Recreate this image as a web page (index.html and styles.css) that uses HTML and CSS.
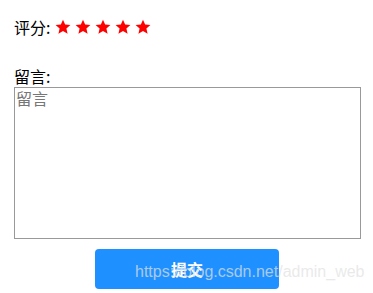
FILE: index.html
```html
<!DOCTYPE html>
<html lang="zh">
<head>
<meta charset="utf-8">
<link rel="stylesheet" href="styles.css">
</head>
<body>
<form class="form">
  <div class="rating-row">
    <span class="label">评分:</span>
    <span class="stars">
      <svg class="star" viewBox="0 0 24 24"><path d="M12 1l3.2 7.3 7.9.7-6 5.3 1.8 7.8L12 17.9l-6.9 4.2 1.8-7.8-6-5.3 7.9-.7z"/></svg>
      <svg class="star" viewBox="0 0 24 24"><path d="M12 1l3.2 7.3 7.9.7-6 5.3 1.8 7.8L12 17.9l-6.9 4.2 1.8-7.8-6-5.3 7.9-.7z"/></svg>
      <svg class="star" viewBox="0 0 24 24"><path d="M12 1l3.2 7.3 7.9.7-6 5.3 1.8 7.8L12 17.9l-6.9 4.2 1.8-7.8-6-5.3 7.9-.7z"/></svg>
      <svg class="star" viewBox="0 0 24 24"><path d="M12 1l3.2 7.3 7.9.7-6 5.3 1.8 7.8L12 17.9l-6.9 4.2 1.8-7.8-6-5.3 7.9-.7z"/></svg>
      <svg class="star" viewBox="0 0 24 24"><path d="M12 1l3.2 7.3 7.9.7-6 5.3 1.8 7.8L12 17.9l-6.9 4.2 1.8-7.8-6-5.3 7.9-.7z"/></svg>
    </span>
  </div>
  <div class="comment">
    <label class="label">留言:</label>
    <textarea class="textarea" placeholder="留言"></textarea>
  </div>
  <div class="actions">
    <button type="button" class="submit">提交</button>
  </div>
</form>
<div class="watermark">https://blog.csdn.net/admin_web</div>
</body>
</html>
```
FILE: styles.css
```css
html, body {
  margin: 0;
  padding: 0;
  background: #fff;
}
body {
  font-family: "Noto Sans CJK SC", "Liberation Sans", sans-serif;
  font-size: 16px;
  color: #000;
  position: relative;
  width: 373px;
  height: 293px;
  overflow: hidden;
}
.form {
  padding: 17px 13px 0 14px;
  display: flex;
  flex-direction: column;
}
.rating-row {
  display: flex;
  align-items: center;
  height: 20px;
  gap: 5px;
}
.label {
  line-height: 20px;
}
.stars {
  display: flex;
  gap: 4px;
  align-items: center;
}
.star {
  width: 16px;
  height: 16px;
  fill: #ff0000;
  display: block;
}
.comment {
  margin-top: 28px;
  display: flex;
  flex-direction: column;
}
.comment .label {
  line-height: 22px;
}
.textarea {
  box-sizing: border-box;
  width: 347px;
  height: 152px;
  margin: 0;
  border: 1px solid #999;
  padding: 1px;
  font-family: "Noto Sans CJK SC", "Liberation Sans", sans-serif;
  font-size: 16px;
  line-height: 18px;
  resize: none;
  outline: none;
}
.textarea::placeholder {
  color: #777;
}
.actions {
  display: flex;
  justify-content: center;
  margin-top: 10px;
}
.submit {
  width: 184px;
  height: 40px;
  border: none;
  border-radius: 4px;
  background: #1e90ff;
  color: #fff;
  font-family: "Noto Sans CJK SC", "Liberation Sans", sans-serif;
  font-size: 16px;
  font-weight: bold;
  padding: 0;
  margin: 0;
}
.watermark {
  position: absolute;
  left: 135px;
  top: 262px;
  font-family: "Liberation Sans", sans-serif;
  font-size: 16px;
  line-height: 20px;
  color: rgba(225, 225, 225, 0.72);
  pointer-events: none;
  white-space: nowrap;
}
```
